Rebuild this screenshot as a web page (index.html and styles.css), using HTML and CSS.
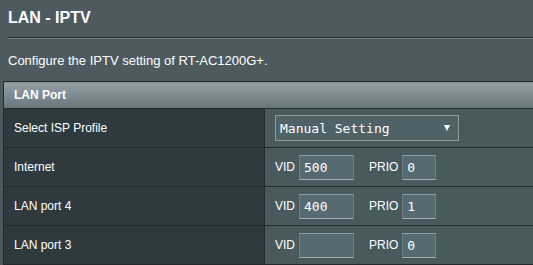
FILE: index.html
```html
<!DOCTYPE html>
<html>
<head>
<meta charset="utf-8">
<link rel="stylesheet" href="styles.css">
</head>
<body>
<div class="page">
  <div class="title">LAN - IPTV</div>
  <div class="split"></div>
  <div class="desc">Configure the IPTV setting of RT-AC1200G+.</div>
  <table class="form">
    <thead>
      <tr><td colspan="2" class="head">LAN Port</td></tr>
    </thead>
    <tbody>
      <tr>
        <th>Select ISP Profile</th>
        <td>
          <div class="select"><span>Manual Setting</span><span class="arrow"></span></div>
        </td>
      </tr>
      <tr>
        <th>Internet</th>
        <td><div class="pair"><span class="lbl">VID</span><span class="inp vid">500</span><span class="lbl prio">PRIO</span><span class="inp pr">0</span></div></td>
      </tr>
      <tr>
        <th>LAN port 4</th>
        <td><div class="pair"><span class="lbl">VID</span><span class="inp vid">400</span><span class="lbl prio">PRIO</span><span class="inp pr">1</span></div></td>
      </tr>
      <tr>
        <th>LAN port 3</th>
        <td><div class="pair"><span class="lbl">VID</span><span class="inp vid"></span><span class="lbl prio">PRIO</span><span class="inp pr">0</span></div></td>
      </tr>
    </tbody>
  </table>
</div>
</body>
</html>
```

FILE: styles.css
```css
html, body {
  margin: 0;
  padding: 0;
  background: #4d5a60;
  overflow: hidden;
}
body {
  font-family: "Liberation Sans", Arial, sans-serif;
  color: #fff;
  width: 533px;
  height: 265px;
}
.page {
  padding: 9px 0 0 3px;
  width: 530px;
  height: 256px;
  overflow: hidden;
}
.title {
  margin-left: 5px;
  font-size: 16px;
  font-weight: bold;
  line-height: 18px;
  height: 18px;
}
.split {
  margin: 10px -10px 0 5px;
  height: 0;
  border-top: 1px solid #273136;
  border-bottom: 1px solid #6f8087;
}
.desc {
  margin: 14px 0 0 5px;
  font-size: 13px;
  line-height: 16px;
  height: 16px;
}
.form {
  margin-top: 12px;
  border-collapse: collapse;
  width: 760px;
  font-size: 12px;
}
.form td, .form th {
  border: 1px solid #222b2f;
  padding: 0;
}
.form .head {
  height: 26px;
  padding-left: 10px;
  font-weight: bold;
  text-align: left;
  background: linear-gradient(#95a2a7, #66757b);
}
.form th {
  width: 250px;
  height: 38px;
  text-align: left;
  font-weight: normal;
  padding-left: 10px;
  background: #2f3a3f;
}
.form td {
  background: #495a5f;
  padding-left: 10px;
}
.select {
  height: 24px;
  width: 178px;
  border: 1px solid #8d9a9e;
  background: #4f6268;
  display: flex;
  align-items: center;
  justify-content: space-between;
  padding: 0 0 0 4px;
  font-family: "DejaVu Sans Mono", monospace;
  font-size: 13px;
}
.select .arrow {
  width: 0;
  height: 0;
  border-left: 3px solid transparent;
  border-right: 3px solid transparent;
  border-top: 6px solid #fff;
  margin-right: 8px;
}
.pair {
  display: flex;
  align-items: center;
}
.lbl {
  margin-right: 4px;
}
.prio {
  margin-left: 15px;
}
.inp {
  background: #566b71;
  border-top: 1px solid #8f9ca0;
  border-left: 1px solid #6e7e83;
  border-right: 1px solid #6e7e83;
  border-bottom: 1px solid #a3adb0;
  font-family: "DejaVu Sans Mono", monospace;
  font-size: 13px;
  padding-left: 4px;
  box-sizing: border-box;
  height: 25px;
  display: flex;
  align-items: center;
}
.vid { width: 55px; }
.pr { width: 34px; }
```
